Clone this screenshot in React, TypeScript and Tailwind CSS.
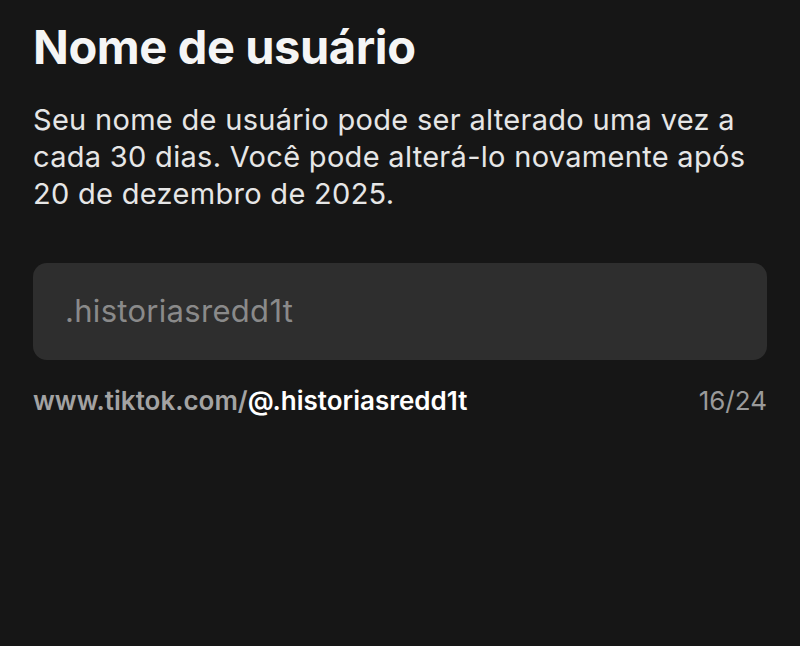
export default function App() {
  return (
    <div
      className="w-[800px] h-[646px] bg-[#161616] px-[33px] pt-[19px] text-white"
      style={{ fontFamily: 'Inter, "Noto Sans", sans-serif' }}
    >
      <h1 className="text-[47px] leading-[56px] font-bold tracking-[-0.4px] text-[#f5f5f5]">Nome de usuário</h1>
      <p className="mt-[26px] text-[29px] leading-[37px] text-[#e6e6e6] tracking-[0.3px]">
        Seu nome de usuário pode ser alterado uma vez a cada 30 dias. Você pode alterá-lo novamente após 20 de dezembro de 2025.
      </p>
      <div className="mt-[51px] h-[97px] rounded-[14px] bg-[#2e2e2e] flex items-center px-[32px]">
        <span className="text-[31px] text-[#8a8a8a] tracking-[0.3px]">.historiasredd1t</span>
      </div>
      <div className="mt-[25px] flex items-center justify-between text-[26px] leading-[32px]">
        <span className="font-semibold">
          <span className="text-[#a3a3a3]">www.tiktok.com/</span>
          <span className="text-white">@.historiasredd1t</span>
        </span>
        <span className="text-[#9a9a9a]">16/24</span>
      </div>
    </div>
  );
}
